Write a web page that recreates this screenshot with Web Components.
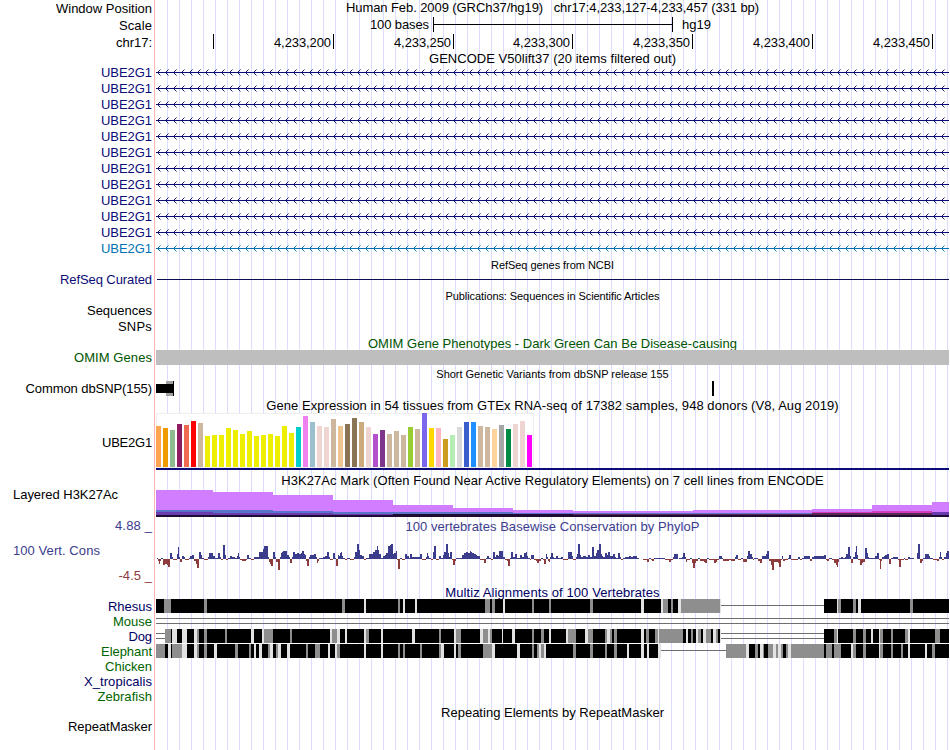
<!DOCTYPE html>
<html lang="en">
<head>
<meta charset="utf-8">
<title>chr17:4,233,127-4,233,457</title>
<style>
	body {
		margin: 0;
		background: #fff;
		font-family: "Liberation Sans", Arial, sans-serif;
		font-size: 13px;
		line-height: 15px;
		color: #000;
	}
</style>
</head>
<body>
<genome-browser>
	<track-row height="17" base="13" label="Window Position" fit="96"><track-title base="12" fit="413">Human Feb. 2009 (GRCh37/hg19)   chr17:4,233,127-4,233,457 (331 bp)</track-title></track-row>
	<track-row height="17" base="13" label="Scale" fit="33"><scale-bar></scale-bar></track-row>
	<track-row height="17" base="13" label="chr17:" fit="36"><base-ruler></base-ruler></track-row>
	<track-row height="13"><track-title base="12" fit="247">GENCODE V50lift37 (20 items filtered out)</track-title></track-row>
	<gene-list></gene-list>
	<track-row height="16"><track-title base="14" fit="123" small>RefSeq genes from NCBI</track-title></track-row>
	<track-row height="15" base="12" label="RefSeq Curated" fit="92" color="#0c0c78"><thin-line></thin-line></track-row>
	<track-row height="16"><track-title base="14" fit="214.5" small>Publications: Sequences in Scientific Articles</track-title></track-row>
	<track-row height="16" base="12" label="Sequences" fit="65"></track-row>
	<track-row height="16" base="12" label="SNPs" fit="34"></track-row>
	<track-row height="15" color="#005500"><track-title base="13" fit="369">OMIM Gene Phenotypes - Dark Green Can Be Disease-causing</track-title></track-row>
	<track-row height="15" base="12" label="OMIM Genes" fit="78" color="#005500"><solid-band></solid-band></track-row>
	<track-row height="16"><track-title base="14" fit="232.5" small>Short Genetic Variants from dbSNP release 155</track-title></track-row>
	<track-row height="15" base="12" label="Common dbSNP(155)" fit="126.5"><snp-marks></snp-marks></track-row>
	<track-row height="16"><track-title base="14" fit="573">Gene Expression in 54 tissues from GTEx RNA-seq of 17382 samples, 948 donors (V8, Aug 2019)</track-title></track-row>
	<track-row height="59" base="35" label="UBE2G1" fit="50"><expression-bars></expression-bars></track-row>
	<track-row height="16"><track-title base="14" fit="543">H3K27Ac Mark (Often Found Near Active Regulatory Elements) on 7 cell lines from ENCODE</track-title></track-row>
	<track-row height="31" base="12" label="Layered H3K27Ac" fit="105" align="left"><signal-layers></signal-layers></track-row>
	<track-row height="16" base="12" label="4.88 _" fit="37" color="#3c3c8c"><track-title base="13" fit="294">100 vertebrates Basewise Conservation by PhyloP</track-title></track-row>
	<track-row height="37" base="21" label="100 Vert. Cons" fit="87" align="left" color="#3c3c8c"><conservation-plot></conservation-plot></track-row>
	<track-row height="13" base="9" label="-4.5 _" fit="33.5" color="#8c3c3c"></track-row>
	<track-row height="15" color="#000064"><track-title base="13" fit="215">Multiz Alignments of 100 Vertebrates</track-title></track-row>
	<track-row height="15" base="12" label="Rhesus" fit="44" color="#000064">
		<align-blocks black="0,565 668,125"
			grey="8,7 48,3 186,3 242,2 329,5 336,3 376,2 393,2 434,3 507,5 515,2 525,39 682,3 697,3 754,3"
			light="208,2 247,2 259,2 347,2 485,3 505,2 522,3 564,1 681,1 702,3"
			single="565,103"></align-blocks>
	</track-row>
	<track-row height="15" base="12" label="Mouse" fit="39" color="#006400">
		<align-blocks double="0,793"></align-blocks>
	</track-row>
	<track-row height="15" base="12" label="Dog" fit="23.5" color="#000064">
		<align-blocks black="9,556 668,125"
			grey="9,6 41,2 48,3 69,2 108,9 134,2 176,5 210,3 283,2 300,5 327,5 334,2 376,2 385,3 412,8 432,5 449,2 454,2 458,3 490,3 499,3 503,24 535,2 542,3 550,5 560,2 678,3 697,3 707,3 724,3 735,2 749,3 779,5"
			light="16,5 26,5 38,3 95,3 106,2 174,2 181,3 189,2 208,2 225,2 256,3 298,2 324,3 332,2 346,1 356,3 393,2 410,2 429,3 451,3 485,3 502,1 530,2 540,2 547,3 557,3 564,1 681,1 715,2 723,1 752,2"
			double="0,9 565,103"></align-blocks>
	</track-row>
	<track-row height="15" base="12" label="Elephant" fit="51" color="#006400">
		<align-blocks black="0,505 570,223"
			grey="0,9 16,10 41,2 48,3 79,3 93,2 112,2 120,2 150,2 159,5 181,3 242,2 247,2 264,2 283,2 302,3 327,7 334,2 376,2 381,2 385,3 417,3 434,3 449,2 458,3 570,20 599,3 607,1 612,5 620,2 625,2 630,2 635,33 670,6 678,7 697,3 707,3 724,3 735,2 745,2 776,3"
			light="12,3 26,5 38,3 58,3 98,2 103,3 114,3 122,3 131,3 172,2 179,2 208,2 225,2 285,3 298,2 336,3 361,3 383,2 388,2 471,2 485,3 491,2 502,3 590,3 604,3 617,3 622,3 632,3 695,2 723,1 752,2 769,2"
			single="505,65"></align-blocks>
	</track-row>
	<track-row height="15" base="12" label="Chicken" fit="47" color="#006400"></track-row>
	<track-row height="15" base="12" label="X_tropicalis" fit="68" color="#000064"></track-row>
	<track-row height="15" base="12" label="Zebrafish" fit="54.5" color="#006400"></track-row>
	<track-row height="15"><track-title base="13" fit="223">Repeating Elements by RepeatMasker</track-title></track-row>
	<track-row height="16" base="12" label="RepeatMasker" fit="84"></track-row>
</genome-browser>

<script>
const PLOT_WIDTH = 793;
const ruler = document.createElement('canvas').getContext('2d');

// letter-spacing that makes the text as wide as the given number of pixels
function spacingFor(text, size, width) {
	if (!width) {
		return 0;
	}
	ruler.font = `${size}px "Liberation Sans", Arial, sans-serif`;
	return (width - ruler.measureText(text).width) / text.length;
}

function rect(x, y, w, h, fill) {
	return `<rect x="${x}" y="${y}" width="${w}" height="${h}" fill="${fill}"/>`;
}

function pairs(text) {
	return (text || '').split(/\s+/).filter(Boolean).map(p => p.split(',').map(Number));
}

// Base for everything that is drawn in the plot column
class TrackPlot extends HTMLElement {
	connectedCallback() {
		if (this.shadowRoot) {
			return;
		}
		const shadow = this.attachShadow({ mode: 'open' });
		shadow.innerHTML = `
			<style>
				:host { display: block; }
				svg { display: block; }
			</style>
			<svg width="${PLOT_WIDTH}" height="${this.plotHeight}" shape-rendering="crispEdges">${this.draw()}</svg>
		`;
	}
}

class GenomeBrowser extends HTMLElement {
	connectedCallback() {
		const shadow = this.attachShadow({ mode: 'open' });
		shadow.innerHTML = `
			<style>
				:host {
					display: block;
					box-sizing: border-box;
					width: 949px;
					height: 750px;
					overflow: hidden;
					background:
						linear-gradient(#ffb4b4, #ffb4b4) 154px 0 / 1px 100% no-repeat,
						repeating-linear-gradient(90deg, transparent 0 11px, #dcdcff 11px 12px) 156px 0 / 793px 100% no-repeat;
				}
			</style>
			<slot></slot>
		`;
	}
}

class TrackRow extends HTMLElement {
	connectedCallback() {
		const label = this.getAttribute('label') || '';
		const left = this.getAttribute('align') === 'left';
		const spacing = spacingFor(label, 13, Number(this.getAttribute('fit')));
		const shadow = this.attachShadow({ mode: 'open' });
		shadow.innerHTML = `
			<style>
				:host {
					display: grid;
					grid-template-columns: 156px ${PLOT_WIDTH}px;
					height: ${this.getAttribute('height')}px;
					color: ${this.getAttribute('color') || '#000'};
				}
				.label {
					box-sizing: border-box;
					height: 0;
					margin-top: ${Number(this.getAttribute('base') || 12) - 12}px;
					padding: 0 4px 0 13px;
					text-align: ${left ? 'left' : 'right'};
					letter-spacing: ${spacing}px;
					white-space: pre;
				}
			</style>
			<div class="label">${label}</div>
			<slot></slot>
		`;
	}
}

class TrackTitle extends HTMLElement {
	connectedCallback() {
		const size = this.hasAttribute('small') ? 11 : 13;
		const spacing = spacingFor(this.textContent, size, Number(this.getAttribute('fit')));
		const shadow = this.attachShadow({ mode: 'open' });
		shadow.innerHTML = `
			<style>
				:host {
					display: block;
					height: 0;
					margin-top: ${Number(this.getAttribute('base')) - 12}px;
					font-size: ${size}px;
					letter-spacing: ${spacing}px;
					text-align: center;
				}
				div { white-space: pre; }
			</style>
			<div><slot></slot></div>
		`;
	}
}

class ScaleBar extends HTMLElement {
	connectedCallback() {
		const shadow = this.attachShadow({ mode: 'open' });
		shadow.innerHTML = `
			<style>
				:host { display: flex; }
				.size {
					box-sizing: border-box;
					width: 277px;
					padding-right: 4px;
					text-align: right;
					letter-spacing: ${spacingFor('100 bases', 13, 59)}px;
				}
				.bar {
					box-sizing: border-box;
					width: 240px;
					height: 15px;
					border: solid #000;
					border-width: 0 1px;
					background: linear-gradient(#000, #000) 0 7px / 100% 1px no-repeat;
				}
				.db { padding-left: 9px; }
			</style>
			<span class="size">100 bases</span>
			<span class="bar"></span>
			<span class="db">hg19</span>
		`;
	}
}

class BaseRuler extends HTMLElement {
	connectedCallback() {
		const cells = [
			['', 58], ['4,233,200', 120], ['4,233,250', 120], ['4,233,300', 119],
			['4,233,350', 120], ['4,233,400', 120], ['4,233,450', 120]
		];
		const shadow = this.attachShadow({ mode: 'open' });
		shadow.innerHTML = `
			<style>
				:host { display: flex; }
				span {
					box-sizing: border-box;
					height: 15px;
					padding: 1px 2px 0 0;
					border-right: 1px solid #000;
					text-align: right;
					letter-spacing: ${spacingFor('4,233,200', 13, 57)}px;
				}
			</style>
			${cells.map(([text, width]) => `<span style="width: ${width}px">${text}</span>`).join('')}
		`;
	}
}

class GeneList extends HTMLElement {
	connectedCallback() {
		const shadow = this.attachShadow({ mode: 'open' });
		const colors = Array(11).fill('#0c0c78').concat('#0072b2');
		shadow.innerHTML = `
			<style>
				:host { display: block; }
			</style>
			${colors.map(c => `
				<track-row height="16" base="13" label="UBE2G1" fit="51" color="${c}"><intron-line></intron-line></track-row>
			`).join('')}
		`;
	}
}

class IntronLine extends TrackPlot {
	plotHeight = 16;

	draw() {
		let arrows = '';
		for (let x = 1; x < PLOT_WIDTH; x += 8) {
			arrows += `M${x + 3.5} 5.5l-3 3l3 3`;
		}
		return `
			<rect y="8" width="${PLOT_WIDTH}" height="1" fill="currentColor"/>
			<path d="${arrows}" fill="none" stroke="currentColor" stroke-width="0.95" shape-rendering="auto"/>
		`;
	}
}

class ThinLine extends TrackPlot {
	plotHeight = 15;

	draw() {
		return rect(1, 7, 792, 1, '#0c0c50');
	}
}

class SolidBand extends TrackPlot {
	plotHeight = 15;

	draw() {
		return rect(0, 0, PLOT_WIDTH, 15, '#bebebe');
	}
}

class SnpMarks extends TrackPlot {
	plotHeight = 15;

	draw() {
		return rect(10, 0, 7, 15, '#a0a0a0') +
			rect(0, 3, 17, 9, '#000') +
			rect(17, 0, 1, 15, '#000') +
			rect(556, 0, 2, 15, '#000');
	}
}

class ExpressionBars extends TrackPlot {
	plotHeight = 58;

	draw() {
		const heights = [
			41, 39, 37, 43, 42, 46, 44, 31, 32, 32, 39, 37, 33, 36, 31, 32, 33, 31,
			41, 34, 40, 51, 45, 41, 40, 48, 41, 43, 49, 45, 40, 33, 37, 33, 36, 32,
			40, 38, 54, 39, 39, 28, 32, 40, 45, 45, 41, 40, 38, 42, 38, 43, 46, 32
		];
		const yellow = Array(13).fill('eeee00');
		const colors = [
			'ffa54f', 'ee9a00', '8fbc8f', '8b1c62', 'ee6a50', 'ff0000', 'cdb79e', ...yellow,
			'00cdcd', 'ee82ee', '9ac0cd', 'eed5d2', 'eed5d2', 'cdb79e', 'eec591', '8b7355',
			'8b7355', 'cdaa7d', 'eed5d2', 'b452cd', '7a378b', 'cdb79e', 'cdb79e', 'cdb79e',
			'9acd32', 'cdb79e', '7a67ee', 'ffd700', 'ffb6c1', 'cd9b1d', 'b4eeb4', 'd9d9d9',
			'3a5fcd', '1e90ff', 'cdb79e', 'cdb79e', 'ffd39b', 'a6a6a6', '008b45', 'eed5d2',
			'eed5d2', 'ff00ff'
		];
		return rect(0, 1, 378, 55, '#eeeeee') +
			rect(1, 2, 376, 53, '#fff') +
			heights.map((h, i) => rect(i * 7, 55 - h, 5, h, `#${colors[i]}`)).join('') +
			rect(0, 56, PLOT_WIDTH, 2, '#0c0c78');
	}
}

class SignalLayers extends TrackPlot {
	plotHeight = 30;

	// each layer is a list of steps: x, top
	draw() {
		const layers = [
			['#d17dff', '0,3 57,5 117,8 177,13 237,18 297,21 357,23 417,24 537,23 656,22 716,18 776,15'],
			['#d23cbe', '656,25 716,24 776,25'],
			['#5a73c8', '0,23 117,24 177,25 297,25 357,26 537,26'],
			['#d23cbe', '656,25 716,24 776,25'],
			['#6a3ab0', '0,25 57,26 177,27 297,28 776,25'],
			['#5a2850', '417,27 656,26 776,28'],
			['#1e0a32', '0,28 237,27 417,28']
		];
		return layers.map(([fill, data]) => {
			const steps = pairs(data);
			return steps.map(([x, top], i) => {
				const end = i + 1 < steps.length ? steps[i + 1][0] : PLOT_WIDTH;
				return rect(x, top, end - x, 30 - top, fill);
			}).join('');
		}).join('');
	}
}

class ConservationPlot extends TrackPlot {
	plotHeight = 37;

	// start, then runs of width,score; conserved bases go up, fast evolving ones down
	draw() {
		const sections = [
			[0, `
			1,0 1,1 1,-2 1,-5 1,-2 2,1 2,-6 2,-5 1,-6 2,-8 2,6 1,2 4,-1 1,5 1,12 1,2 2,-3 2,3 1,2 4,-1
			1,1 2,3 2,4 2,-2 1,-5 2,-9 2,7 1,4 2,1 4,-1 1,2 4,6 2,3 3,1 2,6 1,2 2,-1 2,14 1,4 2,-1
			2,1 2,3 3,2 2,1 1,3 1,6 1,2 2,-1 4,-2 1,-1 2,4 2,1 3,-1 3,2 2,2 4,7 1,10 4,13 1,2 1,-3
			1,-5 2,-7 2,7 1,2 2,-3 2,-11 1,2 1,6 1,7 4,8 2,4 1,2 2,-4 1,2 2,7 2,5 2,6 2,5 1,6 2,8
			1,5 1,4 1,-2 2,-7 1,2 4,4 2,5 1,2 1,-4 1,-2 4,1 2,2 2,3 2,7 1,2 3,-1 2,6 1,1 2,-7 1,4
			1,3 1,6 1,7 1,3 2,1 2,-1 3,1 4,-1 1,2 2,7 2,15 1,9 2,4 2,3 2,-1 3,1 4,5 2,7 2,9 1,13
			1,9 2,5 2,1 2,3 1,4 2,6 2,13 1,14 2,15 1,5 2,6 1,8 1,-1 2,-10 2,1 3,-1 2,5 2,3 1,1 2,5
			4,2 4,2`],
			[264, `
			2,5 4,-1 1,2 1,6 1,3 2,1 2,-1 1,7 2,13 3,-1 2,3 2,1 1,4 2,7 2,15 1,6 1,2 2,7 1,-1 2,-6
			1,-2 4,1 2,1 2,4 2,6 2,7 2,6 1,8 1,7 2,6 2,5 1,4 3,3 4,-1 2,-4 1,1 2,3 2,1 2,-1 2,7
			1,2 2,4 1,3 4,8 2,2 2,-1 1,-2 2,-7 1,1 2,7 2,2 2,5 3,1 2,4 2,2 2,6 1,7 1,3 2,1 1,-1
			3,4 2,-1 1,-2 2,-4 2,-2 2,1 1,-1 2,-5 1,5 1,2 1,-2 1,-3 1,2 2,6 1,2 2,1 2,3 3,1 2,2
			5,-1 4,7 1,3 3,-1 1,2 1,5 2,15 1,4 2,2 3,3 2,2 2,4 2,2 2,12 2,3 1,6 2,9 2,15 1,5 1,3
			2,2 2,6 1,4 2,7 3,3 2,5 1,2 2,1 2,6 1,2 2,-1 2,1 4,2 2,3 2,2 4,3 2,1 4,0 4,-1 2,-3
			2,1 1,-1 2,-2 3,1 8,1 4,-1 2,-3 2,-1 1,2 4,5`],
			[523, `
			3,1 1,2 2,6 1,2 1,-3 3,-1 2,1 1,-4 2,-9 1,-4 2,-2 2,1 2,-2 2,-2 1,-3 2,-4 2,1 5,-1 2,-4
			1,-3 2,-1 3,3 1,1 6,-2 2,-1 4,-2 1,2 2,4 3,-1 2,1 4,-3 1,3 2,8 2,5 1,2 1,-1 4,1 2,-2
			2,-4 4,3 1,5 2,8 2,-2 1,-6 2,-11 4,-3 1,-4 2,-8 1,-1 1,3 2,-2 3,-1 1,1 2,4 7,-1 2,2
			2,-1 2,1 6,3 2,-2 2,2 10,3 2,4 1,-1 2,-2 3,1 2,-1 2,-4 1,-6 1,-8 1,-3 2,1 2,2 2,1 1,2
			2,5 2,12 1,3 2,-4 2,2 1,7 1,13 1,4 2,-1 2,-6 1,-4 2,-3 2,11 1,6 1,2 6,1 2,3 2,6 1,-1
			1,-10 1,-2 2,2 1,3 2,4 2,5 2,-5 2,1 5,2 1,-1 2,-8 3,-1 1,1 3,-1 2,2 4,1 3,0 1,6 2,15
			2,-4 1,-2 2,1 4,5 1,3 3,1 4,-1 2,-2 1,2 1,7 1,2 2,-1 1,2 1,2 1,6 2,8`]
		];
		return sections.map(([start, runs]) => {
			let x = start;
			return pairs(runs).map(([w, score]) => {
				const bar = score > 0
					? rect(x, 25 - score, w, score, '#3c3c8c')
					: rect(x, 25, w, -score, '#8c3c3c');
				x += w;
				return bar;
			}).join('');
		}).join('');
	}
}

class AlignBlocks extends TrackPlot {
	plotHeight = 14;

	draw() {
		const blocks = (name, y, h, fill) =>
			pairs(this.getAttribute(name)).map(([x, w]) => rect(x, y, w, h, fill)).join('');
		return blocks('black', 0, 14, '#000') +
			blocks('grey', 0, 14, '#8e8e8e') +
			blocks('light', 0, 14, '#e2e2e2') +
			blocks('single', 6, 1, '#6e6e6e') +
			blocks('double', 4, 1, '#6e6e6e') +
			blocks('double', 9, 1, '#6e6e6e');
	}
}

customElements.define('genome-browser', GenomeBrowser);
customElements.define('track-row', TrackRow);
customElements.define('track-title', TrackTitle);
customElements.define('scale-bar', ScaleBar);
customElements.define('base-ruler', BaseRuler);
customElements.define('gene-list', GeneList);
customElements.define('intron-line', IntronLine);
customElements.define('thin-line', ThinLine);
customElements.define('solid-band', SolidBand);
customElements.define('snp-marks', SnpMarks);
customElements.define('expression-bars', ExpressionBars);
customElements.define('signal-layers', SignalLayers);
customElements.define('conservation-plot', ConservationPlot);
customElements.define('align-blocks', AlignBlocks);
</script>
</body>
</html>
